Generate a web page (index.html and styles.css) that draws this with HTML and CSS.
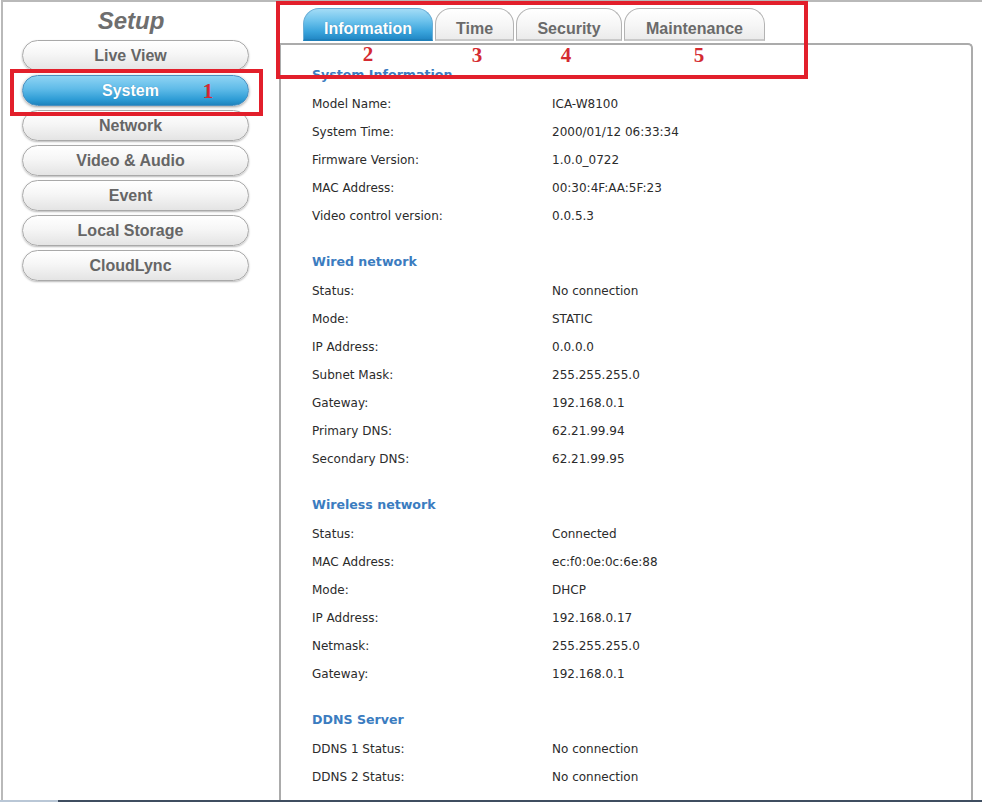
FILE: index.html
```html
<!DOCTYPE html>
<html>
<head>
<meta charset="utf-8">
<title>Setup - System</title>
<link rel="stylesheet" href="styles.css">
</head>
<body>
<div class="page">
  <div class="frame">
    <aside class="sidebar">
      <div class="setup-title">Setup</div>
      <nav class="menu">
        <a class="menu-btn">Live View</a>
        <a class="menu-btn active">System</a>
        <a class="menu-btn">Network</a>
        <a class="menu-btn">Video &amp; Audio</a>
        <a class="menu-btn">Event</a>
        <a class="menu-btn">Local Storage</a>
        <a class="menu-btn">CloudLync</a>
      </nav>
    </aside>
    <main class="main">
      <div class="tabs">
        <div class="tab tab-info active">Information</div>
        <div class="tab tab-time">Time</div>
        <div class="tab tab-sec">Security</div>
        <div class="tab tab-maint">Maintenance</div>
      </div>
      <div class="panel">
        <section class="section">
          <h3 class="sec-title">System Information</h3>
          <div class="row"><span class="lbl">Model Name:</span><span class="val">ICA-W8100</span></div>
          <div class="row"><span class="lbl">System Time:</span><span class="val">2000/01/12 06:33:34</span></div>
          <div class="row"><span class="lbl">Firmware Version:</span><span class="val">1.0.0_0722</span></div>
          <div class="row"><span class="lbl">MAC Address:</span><span class="val">00:30:4F:AA:5F:23</span></div>
          <div class="row"><span class="lbl">Video control version:</span><span class="val">0.0.5.3</span></div>
        </section>
        <section class="section">
          <h3 class="sec-title">Wired network</h3>
          <div class="row"><span class="lbl">Status:</span><span class="val">No connection</span></div>
          <div class="row"><span class="lbl">Mode:</span><span class="val">STATIC</span></div>
          <div class="row"><span class="lbl">IP Address:</span><span class="val">0.0.0.0</span></div>
          <div class="row"><span class="lbl">Subnet Mask:</span><span class="val">255.255.255.0</span></div>
          <div class="row"><span class="lbl">Gateway:</span><span class="val">192.168.0.1</span></div>
          <div class="row"><span class="lbl">Primary DNS:</span><span class="val">62.21.99.94</span></div>
          <div class="row"><span class="lbl">Secondary DNS:</span><span class="val">62.21.99.95</span></div>
        </section>
        <section class="section">
          <h3 class="sec-title">Wireless network</h3>
          <div class="row"><span class="lbl">Status:</span><span class="val">Connected</span></div>
          <div class="row"><span class="lbl">MAC Address:</span><span class="val">ec:f0:0e:0c:6e:88</span></div>
          <div class="row"><span class="lbl">Mode:</span><span class="val">DHCP</span></div>
          <div class="row"><span class="lbl">IP Address:</span><span class="val">192.168.0.17</span></div>
          <div class="row"><span class="lbl">Netmask:</span><span class="val">255.255.255.0</span></div>
          <div class="row"><span class="lbl">Gateway:</span><span class="val">192.168.0.1</span></div>
        </section>
        <section class="section">
          <h3 class="sec-title">DDNS Server</h3>
          <div class="row"><span class="lbl">DDNS 1 Status:</span><span class="val">No connection</span></div>
          <div class="row"><span class="lbl">DDNS 2 Status:</span><span class="val">No connection</span></div>
        </section>
      </div>
    </main>
  </div>
  <div class="taskbar"><span class="tb-start"></span></div>

  <div class="mark box-1"></div>
  <div class="mark box-2"></div>
  <span class="num n1">1</span>
  <span class="num n2">2</span>
  <span class="num n3">3</span>
  <span class="num n4">4</span>
  <span class="num n5">5</span>
</div>
</body>
</html>
```

FILE: styles.css
```css
html, body {
  margin: 0;
  padding: 0;
  background: #fff;
}

.page {
  position: relative;
  width: 982px;
  height: 802px;
  overflow: hidden;
}

.frame {
  display: flex;
  height: 798px;
  margin-left: 1px;
  border-top: 2px solid #b9b9b9;
  border-left: 2px solid #b9b9b9;
  overflow: hidden;
}

/* Sidebar */
.sidebar {
  width: 276px;
  flex: none;
  font-family: "Liberation Sans", Arial, sans-serif;
}

.setup-title {
  height: 38px;
  line-height: 38px;
  text-align: center;
  font-size: 24px;
  font-weight: bold;
  font-style: italic;
  color: #6e6e6e;
  padding-right: 20px;
}

.menu {
  display: flex;
  flex-direction: column;
  gap: 4px;
  padding-left: 19px;
}

.menu-btn {
  display: block;
  box-sizing: border-box;
  width: 227px;
  height: 31px;
  line-height: 29px;
  padding-right: 10px;
  text-align: center;
  font-size: 16px;
  font-weight: bold;
  color: #666;
  border: 1px solid #a9a9a9;
  border-radius: 16px;
  background: linear-gradient(#ffffff 0%, #f6f6f6 45%, #e4e4e4 100%);
  box-shadow: 0 1px 2px rgba(0, 0, 0, 0.28);
}

.menu-btn.active {
  color: #fff;
  border-color: #4a8fbf;
  background: linear-gradient(#8fd4f4 0%, #5fbbe8 45%, #2f9dd6 80%, #1f83bd 100%);
  box-shadow: 0 1px 3px rgba(0, 0, 0, 0.4);
  text-shadow: 0 0 1px rgba(0, 60, 110, 0.4);
}

/* Main */
.main {
  flex: 1;
  display: flex;
  flex-direction: column;
  padding-right: 9px;
}

.tabs {
  display: flex;
  gap: 2px;
  margin-top: 6px;
  padding-left: 24px;
  height: 33px;
}

.tab {
  box-sizing: border-box;
  height: 33px;
  line-height: 40px;
  text-align: center;
  font-family: "Liberation Sans", Arial, sans-serif;
  font-size: 16px;
  font-weight: bold;
  color: #6a6a6a;
  border: 1px solid #b3b3b3;
  border-bottom: 2px solid #c9c9c9;
  border-radius: 16px 16px 0 0;
  background: linear-gradient(#ffffff 0%, #f7f7f7 50%, #ebebeb 100%);
  white-space: nowrap;
}

.tab-info { width: 130px; }
.tab-time { width: 79px; }
.tab-sec { width: 106px; }
.tab-maint { width: 141px; }

.tab.active {
  color: #fff;
  border-color: #6aaed6;
  border-bottom-color: #1f80ba;
  background: linear-gradient(#a3dcf6 0%, #6cc2ec 40%, #3aa4dc 75%, #2389c6 100%);
  text-shadow: 0 0 1px rgba(0, 60, 110, 0.4);
}

.panel {
  flex: 1;
  margin-top: 2px;
  border: 2px solid #ababab;
  border-bottom: none;
  border-top-right-radius: 5px;
  padding: 16px 0 0 31px;
  font-family: "DejaVu Sans", Verdana, sans-serif;
  font-size: 12px;
  color: #2b2b2b;
}

.section + .section {
  margin-top: 18px;
}

.sec-title {
  margin: 0;
  height: 29px;
  line-height: 28px;
  font-size: 12.6px;
  font-weight: bold;
  color: #3b7cc0;
}

.row {
  display: flex;
  height: 28px;
  line-height: 28px;
}

.lbl {
  width: 240px;
  flex: none;
}

/* bottom strip */
.taskbar {
  height: 2px;
  background: #3f4e60;
  display: flex;
}

.tb-start {
  width: 58px;
  background: #b9c7d6;
}

/* annotations */
.mark {
  position: absolute;
  box-sizing: border-box;
  border: 4px solid #e21f2b;
}

.box-1 {
  left: 10px;
  top: 69px;
  width: 253px;
  height: 47px;
}

.box-2 {
  left: 276px;
  top: 1px;
  width: 532px;
  height: 78px;
}

.num {
  position: absolute;
  width: 20px;
  height: 20px;
  line-height: 20px;
  text-align: center;
  font-family: "Liberation Serif", "Times New Roman", serif;
  font-size: 21px;
  font-weight: bold;
  color: #d42a31;
}

.n1 { left: 198px; top: 81px; }
.n2 { left: 358px; top: 44px; }
.n3 { left: 467px; top: 45px; }
.n4 { left: 556px; top: 45px; }
.n5 { left: 689px; top: 45px; }
```
